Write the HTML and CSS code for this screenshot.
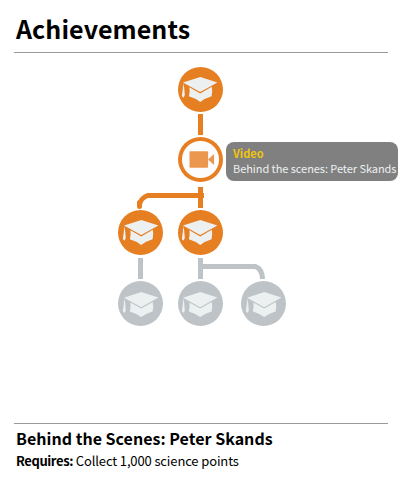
FILE: index.html
```
<!DOCTYPE html>
<html lang="en">
<head>
<meta charset="utf-8">
<title>Achievements</title>
<link rel="stylesheet" href="styles.css">
</head>
<body>
<svg class="symbols" aria-hidden="true">
  <symbol id="cap" viewBox="0 0 45 45">
    <path fill="#ecf0f1" d="M22.300 9.900 39.400 15.400 22.200 25 5 15.600Z"/>
    <path fill="#ecf0f1" d="M5 16 6.200 20.500 6.800 28 5.700 30.500 4.500 30 3.900 28.500 4.900 21Z"/>
    <path fill="#ecf0f1" d="M11.400 20.300 22.200 26.400 33.800 19.700Q34.800 24 33.600 29.200 27.500 31 22.200 34.900 17 31 10.900 29.200 12 25 11.400 20.300Z"/>
  </symbol>
</svg>
<main class="page">
  <h1 class="title">Achievements</h1>
  <section class="tree">
    <svg class="links" width="400" height="370" viewBox="0 53 400 370" fill="none" stroke-width="5">
      <g stroke="#e67e22">
        <path d="M200.500 114v21M200.500 187v21M204 195.500H147.500Q139.500 198.500 139.500 206.500"/>
        <path d="M139.500 202.500v4" stroke-linecap="round"/>
      </g>
      <g stroke="#bdc3c7">
        <path d="M140.500 258v21M200.500 258v21M200.500 266.500H255.500Q262.500 269.500 262.500 279"/>
      </g>
    </svg>
    <svg class="node n1"><use href="#cap" width="45" height="45"/></svg>
    <svg class="node video n2" viewBox="0 0 45 45">
      <rect x="11.500" y="14.200" width="18.600" height="16.500" rx="1" fill="#eb984e"/>
      <path d="M30 22.500 36 17v11Z" fill="#eb984e"/>
    </svg>
    <svg class="node n3"><use href="#cap" x="1" width="45" height="45"/></svg>
    <svg class="node n4"><use href="#cap" width="45" height="45"/></svg>
    <svg class="node locked n5"><use href="#cap" x="1" y="1.200" width="45" height="45"/></svg>
    <svg class="node locked n6"><use href="#cap" y="1.200" width="45" height="45"/></svg>
    <svg class="node locked n7"><use href="#cap" x="1" y="1.200" width="45" height="45"/></svg>
    <div class="tooltip"><strong>Video</strong><span>Behind the scenes: Peter Skands</span></div>
  </section>
  <footer class="details">
    <h2>Behind the Scenes: Peter Skands</h2>
    <p><b>Requires:</b> Collect 1,000 science points</p>
  </footer>
</main>
</body>
</html>
```
FILE: styles.css
```
body {
  margin: 0;
  background: #fff;
  color: #000;
  font-family: "Noto Sans CJK SC", "Open Sans", sans-serif;
}

.symbols {
  display: none;
}

.page {
  width: 400px;
  height: 500px;
  overflow: hidden;
}

.title {
  box-sizing: border-box;
  height: 53px;
  margin: 0 12px 0 14px;
  padding: 9px 0 0 2px;
  border-bottom: 1px solid #999;
  font-size: 25px;
  letter-spacing: 0.08px;
  line-height: 38px;
  white-space: nowrap;
}

.tree {
  position: relative;
  height: 370px;
}

.links {
  display: block;
}

.node {
  position: absolute;
  width: 45px;
  height: 45px;
  border-radius: 50%;
  background: #e67e22;
}

.video {
  background: radial-gradient(circle, #fcfcfc 18px, #e67e22 19px);
}

.locked {
  background: #bdc3c7;
}

.n1 { left: 178px; top: 14px; }
.n2 { left: 178px; top: 84px; }
.n3 { left: 118px; top: 157px; }
.n4 { left: 178px; top: 157px; }
.n5 { left: 118px; top: 228px; }
.n6 { left: 178px; top: 228px; }
.n7 { left: 241px; top: 228px; }

.tooltip {
  position: absolute;
  left: 226px;
  top: 89px;
  box-sizing: border-box;
  width: 172px;
  height: 39px;
  padding: 4px 0 0 7px;
  border-radius: 8px;
  background: #808080;
  color: #ecf0f1;
  font-size: 11px;
  line-height: 15px;
  white-space: nowrap;
}

.tooltip strong {
  display: block;
  color: #f1c40f;
}

.tooltip span {
  display: block;
  letter-spacing: -0.06px;
}

.details {
  margin: 0 12px 0 14px;
  padding: 2px 0 0 2px;
  border-top: 1px solid #999;
  white-space: nowrap;
}

.details h2 {
  margin: 0;
  font-size: 16px;
  letter-spacing: 0.02px;
  line-height: 24px;
}

.details p {
  margin: 0;
  padding-top: 1px;
  font-size: 13px;
  letter-spacing: -0.13px;
  line-height: 20px;
}

.details b {
  letter-spacing: -0.4px;
}
```
